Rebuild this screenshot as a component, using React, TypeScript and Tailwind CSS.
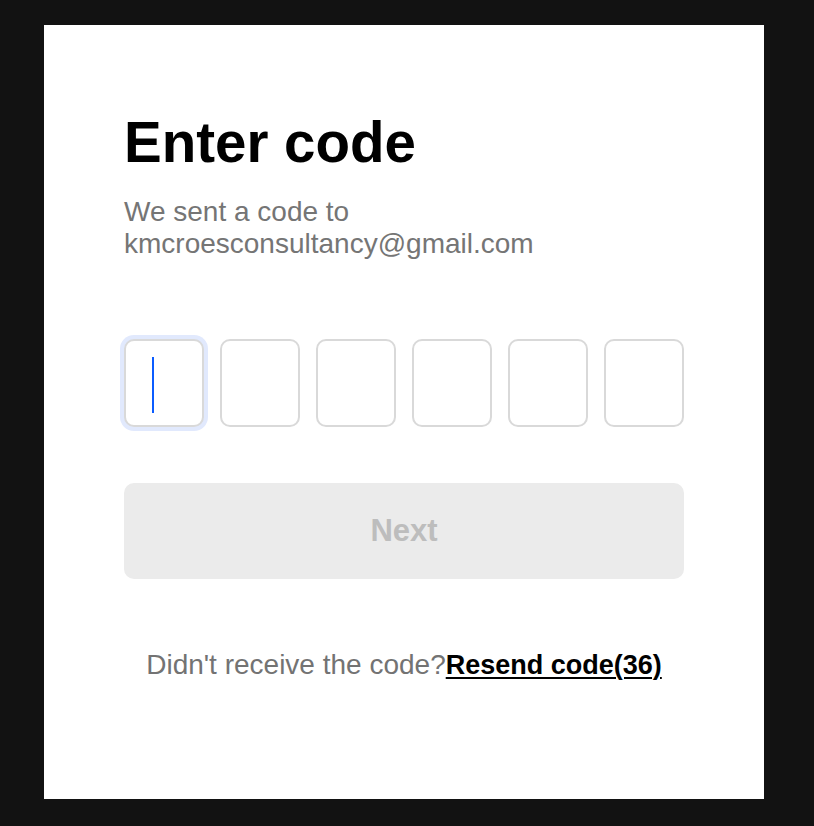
import React from "react";

export default function App() {
  const boxes = [0, 1, 2, 3, 4, 5];
  return (
    <div
      className="w-full h-[826px] bg-[#121212] pl-[44px] pt-[25px]"
      style={{ fontFamily: '"Liberation Sans", Arial, sans-serif' }}
    >
      <div className="w-[720px] h-[774px] bg-white px-[80px] pt-[90px]">
        <h1 className="text-[56.5px] leading-[56px] font-bold text-black">Enter code</h1>
        <p className="mt-[25px] text-[28px] leading-[32px] text-[#757575]">
          We sent a code to kmcroesconsultancy@gmail.com
        </p>
        <div className="mt-[79px] flex gap-[16px]">
          {boxes.map((i) => (
            <div
              key={i}
              className={
                i === 0
                  ? "relative w-[80px] h-[88px] rounded-[10px] border-2 border-[#d9d9d9] bg-white shadow-[0_0_0_4px_#e1e9fd]"
                  : "relative w-[80px] h-[88px] rounded-[10px] border-2 border-[#d9d9d9] bg-white"
              }
            >
              {i === 0 && (
                <div className="absolute left-[26px] top-[16px] w-[2px] h-[56px] bg-[#0b5cff]" />
              )}
            </div>
          ))}
        </div>
        <button className="mt-[56px] w-[560px] h-[96px] rounded-[10px] bg-[#ebebeb] text-[31px] font-bold text-[#bdbdbd] flex items-center justify-center">
          Next
        </button>
        <p className="mt-[70px] text-center text-[28px] leading-[32px] text-[#737373]">
          Didn't receive the code?
          <span className="text-[27px] font-bold text-black underline decoration-2 underline-offset-[3px]">
            Resend code(36)
          </span>
        </p>
      </div>
    </div>
  );
}
